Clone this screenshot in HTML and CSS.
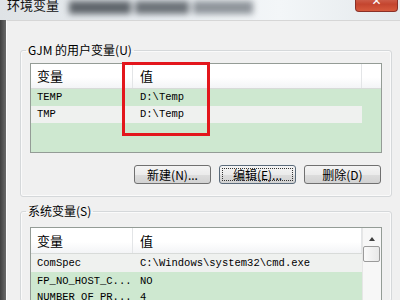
FILE: index.html
```html
<!DOCTYPE html>
<html lang="zh-CN">
<head>
    <meta charset="UTF-8" />
    <title>环境变量</title>
    <link rel="stylesheet" href="styles.css">
</head>
<body>
<div class="titlebar">
    <span class="title">环境变量</span>
    <div class="blurred">
        <span class="smudge smudge-a"></span>
        <span class="smudge smudge-b"></span>
        <span class="smudge smudge-c"></span>
    </div>
    <div class="close">✕</div>
</div>
<div class="frame">
    <div class="edge"></div>
    <div class="dialog">
        <fieldset class="group group-user">
            <legend>GJM 的用户变量(U)</legend>
            <div class="list list-user">
                <div class="list-head">
                    <div class="col-name">变量</div>
                    <div class="col-value">值</div>
                </div>
                <div class="row">
                    <div class="col-name">TEMP</div>
                    <div class="col-value">D:\Temp</div>
                </div>
                <div class="row light">
                    <div class="col-name">TMP</div>
                    <div class="col-value">D:\Temp</div>
                </div>
                <div class="mark"></div>
            </div>
            <div class="buttons">
                <button class="btn">新建(N)...</button>
                <button class="btn focused">编辑(E)...</button>
                <button class="btn">删除(D)</button>
            </div>
        </fieldset>
        <fieldset class="group group-sys">
            <legend>系统变量(S)</legend>
            <div class="list list-sys">
                <div class="list-body">
                    <div class="list-head">
                        <div class="col-name">变量</div>
                        <div class="col-value">值</div>
                    </div>
                    <div class="row light">
                        <div class="col-name">ComSpec</div>
                        <div class="col-value">C:\Windows\system32\cmd.exe</div>
                    </div>
                    <div class="row">
                        <div class="col-name">FP_NO_HOST_C...</div>
                        <div class="col-value">NO</div>
                    </div>
                    <div class="row">
                        <div class="col-name">NUMBER_OF_PR...</div>
                        <div class="col-value">4</div>
                    </div>
                </div>
                <div class="scrollbar">
                    <div class="arrow"></div>
                    <div class="thumb"></div>
                </div>
            </div>
        </fieldset>
    </div>
</div>
</body>
</html>
```

FILE: styles.css
```css
body {
    margin: 0;
    width: 400px;
    height: 300px;
    overflow: hidden;
    background-color: #f0f0f0;
    font-family: "Noto Sans CJK SC", sans-serif;
    font-size: 12px;
    color: #000;
}
.titlebar {
    height: 20px;
    display: flex;
    align-items: flex-start;
    background: linear-gradient(to right, #dfe3e6, #e9eef2 40%, #f3f6f8 70%, #e4e9ec);
    overflow: hidden;
}
.title {
    margin: -4px 0 0 7px;
    font-size: 13px;
    line-height: 18px;
    color: #111;
}
.blurred {
    display: flex;
    gap: 4px;
    margin: 1px 0 0 10px;
    filter: blur(3px);
}
.smudge {
    height: 13px;
    background-color: #5e646a;
}
.smudge-a {
    width: 62px;
}
.smudge-b {
    width: 54px;
    background-color: #6c7278;
}
.smudge-c {
    width: 60px;
    background-color: #8e949a;
}
.close {
    margin: -6px 2px 0 auto;
    width: 41px;
    height: 17px;
    border: 1px solid #8a3027;
    border-top: none;
    border-radius: 0 0 4px 4px;
    background: linear-gradient(#d77a6a, #c4452f 60%, #d65a3d);
    color: #fff;
    font-family: "DejaVu Sans", sans-serif;
    font-size: 12px;
    font-weight: bold;
    line-height: 14px;
    text-align: center;
}
.frame {
    display: flex;
    height: 280px;
}
.edge {
    width: 6px;
    background: linear-gradient(to right, #3f3f3f, #6a6a6a);
}
.dialog {
    flex: 1;
    border-top: 1px solid #d6d6d6;
    border-left: 1px solid #fbfbfb;
    padding: 21px 8px 0 13px;
    overflow: hidden;
}
.group {
    margin: 0;
    border: 1px solid #d5d8da;
    border-radius: 3px;
    box-shadow: inset 0 0 0 1px #fafafa;
    padding: 5px 9px 12px 9px;
}
.group legend {
    margin-left: -4px;
    padding: 0 2px;
    line-height: 16px;
}
.group-sys {
    margin-top: 6px;
    padding-top: 8px;
    padding-bottom: 0;
}
.list {
    position: relative;
    height: 88px;
    border: 1px solid #949c96;
    background-color: #cee8d0;
}
.list-sys {
    display: flex;
    height: 72px;
    overflow: hidden;
}
.list-body {
    flex: 1;
}
.list-head {
    display: flex;
    height: 24px;
    border-bottom: 1px solid #d8dbd9;
    background: linear-gradient(#ffffff, #ffffff 55%, #f3f4f6);
    line-height: 24px;
    font-size: 13px;
}
.list-sys .list-head {
    height: 25px;
    line-height: 25px;
}
.list-head .col-name, .list-head .col-value {
    border-right: 1px solid #e3e5e7;
}
.row {
    display: flex;
    width: 331px;
    height: 17px;
    line-height: 17px;
    font-family: "Liberation Mono", "Noto Sans CJK SC", monospace;
    font-size: 10.5px;
}
.list-sys .row {
    height: 16px;
    line-height: 18px;
}
.list-sys .light {
    height: 18px;
}
.light {
    background-color: #eff1ef;
}
.col-name {
    box-sizing: border-box;
    width: 102px;
    padding-left: 6px;
}
.col-value {
    box-sizing: border-box;
    width: 229px;
    padding-left: 7px;
}
.mark {
    position: absolute;
    left: 91px;
    top: -2px;
    width: 82px;
    height: 68px;
    border: 3px solid #e3161c;
}
.buttons {
    display: flex;
    justify-content: flex-end;
    gap: 8px;
    margin: 12px 1px 0 0;
}
.btn {
    width: 77px;
    height: 19px;
    padding: 0;
    border: 1px solid #707070;
    border-radius: 3px;
    background: linear-gradient(#f4f4f4, #ebebeb 50%, #dddddd 51%, #d2d2d2);
    font-family: "Noto Sans CJK SC", sans-serif;
    font-size: 12px;
    line-height: 16px;
    color: #000;
}
.focused {
    border-color: #5a6a7a;
    outline: 1px dotted #333;
    outline-offset: -4px;
}
.scrollbar {
    width: 18px;
    border-left: 1px solid #e6e6e6;
    background-color: #f7f7f7;
    padding-top: 9px;
}
.arrow {
    width: 0;
    height: 0;
    margin: 0 auto;
    border-left: 3px solid transparent;
    border-right: 3px solid transparent;
    border-bottom: 4px solid #404040;
}
.thumb {
    height: 14px;
    margin: 5px 1px 0 0;
    border: 1px solid #9b9b9b;
    border-radius: 2px;
    background: linear-gradient(to right, #fafafa, #e8e8e8);
}
```
